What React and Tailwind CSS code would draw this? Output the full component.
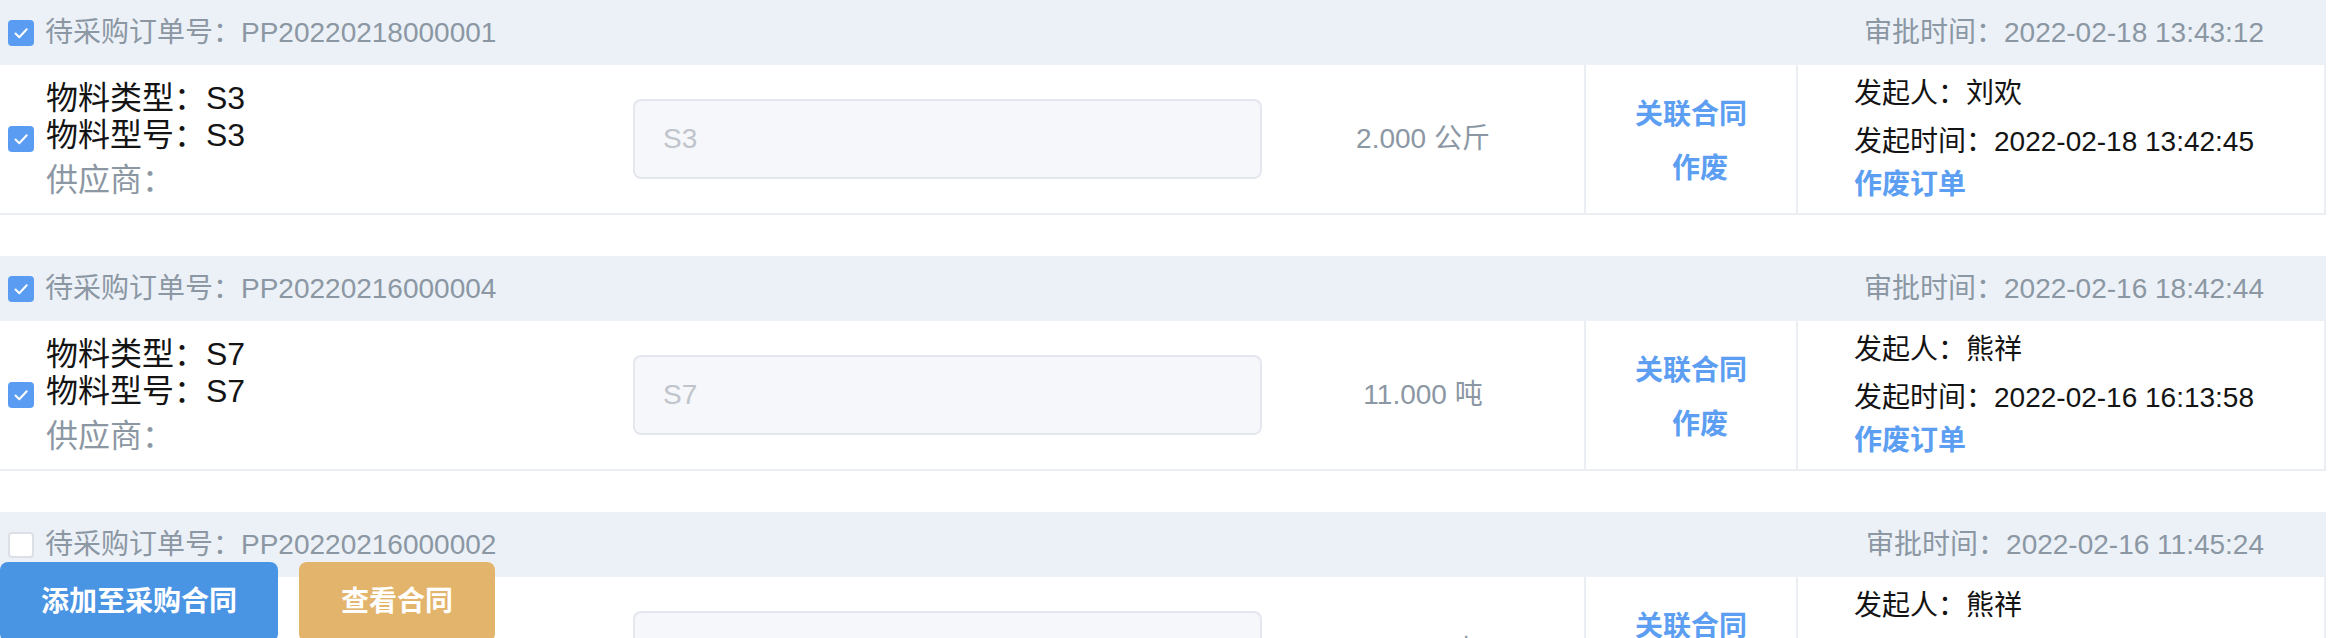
import React from 'react';

const orders = [
  {
    no: 'PP20220218000001',
    approvedAt: '2022-02-18 13:43:12',
    type: 'S3',
    model: 'S3',
    amount: '2.000 公斤',
    creator: '刘欢',
    createdAt: '2022-02-18 13:42:45',
    checked: true,
  },
  {
    no: 'PP20220216000004',
    approvedAt: '2022-02-16 18:42:44',
    type: 'S7',
    model: 'S7',
    amount: '11.000 吨',
    creator: '熊祥',
    createdAt: '2022-02-16 16:13:58',
    checked: true,
  },
  {
    no: 'PP20220216000002',
    approvedAt: '2022-02-16 11:45:24',
    type: 'S6',
    model: 'S6',
    amount: '5.000 吨',
    creator: '熊祥',
    createdAt: '2022-02-16 11:40:10',
    checked: false,
  },
];

function Checkbox({ checked }) {
  if (!checked) {
    return <span className="w-[26px] h-[26px] shrink-0 rounded-[4px] border-2 border-[#dcdfe6] bg-white" />;
  }
  return (
    <span className="w-[26px] h-[26px] shrink-0 rounded-[4px] bg-[#5a9cf2] flex items-center justify-center">
      <svg width="26" height="26" viewBox="0 0 26 26" fill="none">
        <path d="M7.5 13.5l3.8 3.8 7.4-8" stroke="white" strokeWidth="2" strokeLinecap="round" strokeLinejoin="round" />
      </svg>
    </span>
  );
}

function OrderRow({ order }) {
  return (
    <div className="mb-[41px]">
      {/* header */}
      <div className="h-[65px] bg-[#ebf1f6] flex items-center justify-between pl-[8px] pr-[62px] text-[#8c97a4]">
        <div className="flex items-center">
          <Checkbox checked={order.checked} />
          <span className="ml-[11px] leading-[40px]">待采购订单号：{order.no}</span>
        </div>
        <span className="leading-[40px]">审批时间：{order.approvedAt}</span>
      </div>

      {/* body */}
      <div className="h-[150px] flex border-b-2 border-r-2 border-[#ebeef3]">
        <div className="w-[633px] flex items-center pl-[8px]">
          <Checkbox checked={order.checked} />
          <div className="ml-[12px] text-[32px]">
            <div className="leading-[37px] text-[#141414]">物料类型：{order.type}</div>
            <div className="leading-[37px] text-[#141414]">物料型号：{order.model}</div>
            <div className="leading-[37px] mt-[8px] text-[#8c97a4]">供应商：</div>
          </div>
        </div>

        <div className="w-[629px] flex items-center">
          <div className="w-full h-[80px] rounded-[8px] border-2 border-[#e4e7ed] bg-[#f5f7fa] px-[28px] flex items-center text-[#c0c4cc]">
            {order.type}
          </div>
        </div>

        <div className="w-[322px] flex items-center justify-center text-[#8c97a4]">{order.amount}</div>

        <div className="w-[212px] border-l-2 border-[#ebeef3] flex flex-col items-center justify-center gap-[14px] pt-[6px] text-[#5c9ef2] font-semibold">
          <span className="leading-[40px]">关联合同</span>
          <span className="leading-[40px] ml-[18px]">作废</span>
        </div>

        <div className="flex-1 border-l-2 border-[#ebeef3] pl-[56px] pt-[5px]">
          <div className="leading-[48px] text-[#141414]">发起人：{order.creator}</div>
          <div className="leading-[48px] text-[#141414]">发起时间：{order.createdAt}</div>
          <div className="leading-[38px] text-[#5c9ef2] font-semibold">作废订单</div>
        </div>
      </div>
    </div>
  );
}

export default function App() {
  return (
    <div className="h-[638px] overflow-hidden bg-white text-[28px] font-['Liberation_Sans','Noto_Sans_CJK_SC',sans-serif]">
      <div className="w-[2326px]">
        {orders.map((o) => (
          <OrderRow key={o.no} order={o} />
        ))}
      </div>

      {/* bottom actions */}
      <button className="fixed left-0 top-[562px] h-[80px] w-[278px] rounded-[8px] bg-[#4a94e4] text-white font-bold">
        添加至采购合同
      </button>
      <button className="fixed left-[299px] top-[562px] h-[80px] w-[196px] rounded-[8px] bg-[#e3b46c] text-white font-bold">
        查看合同
      </button>
    </div>
  );
}
